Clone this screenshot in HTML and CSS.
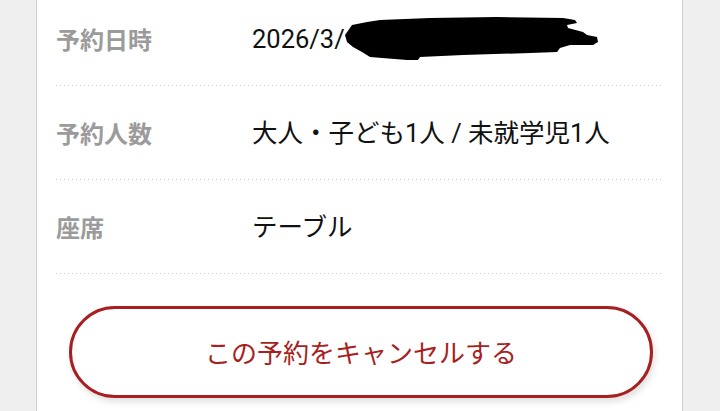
FILE: index.html
```html
<!DOCTYPE html>
<html lang="ja">
<head>
<meta charset="utf-8">
<title>予約詳細</title>
<link rel="stylesheet" href="styles.css">
</head>
<body>
<div class="card">
  <div class="row row-first">
    <div class="label">予約日時</div>
    <div class="value value-date">2026/3/
      <svg class="redact" viewBox="330 10 280 55" width="280" height="55" aria-hidden="true">
        <path d="M345 35 L352 25 L367 22 L380 20 L430 18 L497 17 L563 18 L575 20 L577 23 L567 25 L568 28 L583 32 L587 35 L597 37 L598 42 L593 45 L570 45 L560 48 L557 52 L530 53 L463 55 L420 57 L418 60 L407 60 L370 57 L362 52 L353 47 L347 42 Z" fill="#000"/>
      </svg>
    </div>
  </div>
  <div class="row">
    <div class="label">予約人数</div>
    <div class="value">大人・子ども1人 / 未就学児1人</div>
  </div>
  <div class="row">
    <div class="label">座席</div>
    <div class="value">テーブル</div>
  </div>
  <div class="actions">
    <button class="cancel-btn" type="button">この予約をキャンセルする</button>
  </div>
</div>
</body>
</html>
```
FILE: styles.css
```css
html, body {
  margin: 0;
  padding: 0;
  background: #efefef;
  font-family: Roboto, "Noto Sans CJK JP", sans-serif;
  height: 411px;
  overflow: hidden;
}

.card {
  box-sizing: border-box;
  margin-left: 36px;
  width: 647px;
  min-height: 411px;
  background: #ffffff;
  border-left: 1px solid #cfcfcf;
  border-right: 1px solid #cfcfcf;
  padding: 0 19px;
}

.row {
  display: flex;
  align-items: center;
  padding: 32px 0;
  background-image: linear-gradient(to right, #c8c8c8 0, #c8c8c8 1.5px, transparent 1.5px);
  background-size: 4px 1.5px;
  background-repeat: repeat-x;
  background-position: 0 100%;
}

.row-first {
  padding-top: 24px;
}

.label {
  width: 196px;
  flex: none;
  font-family: "Noto Sans CJK JP", sans-serif;
  font-size: 24px;
  line-height: 30px;
  font-weight: 700;
  color: #9b9b9b;
}

.value {
  font-size: 25.5px;
  line-height: 30px;
  color: #111111;
  white-space: nowrap;
}

.value-date {
  position: relative;
}

.redact {
  position: absolute;
  left: 78px;
  top: -14px;
}

.actions {
  padding: 32px 12px 0 13px;
}

.cancel-btn {
  display: block;
  box-sizing: border-box;
  width: 584px;
  height: 92px;
  border: 3px solid #a81f21;
  border-radius: 46px;
  background: #ffffff;
  color: #a81f21;
  font-family: "Noto Sans CJK JP", sans-serif;
  font-size: 26px;
  line-height: 30px;
  box-shadow: 2px 4px 6px rgba(0, 0, 0, 0.12);
  padding: 0;
}
```
